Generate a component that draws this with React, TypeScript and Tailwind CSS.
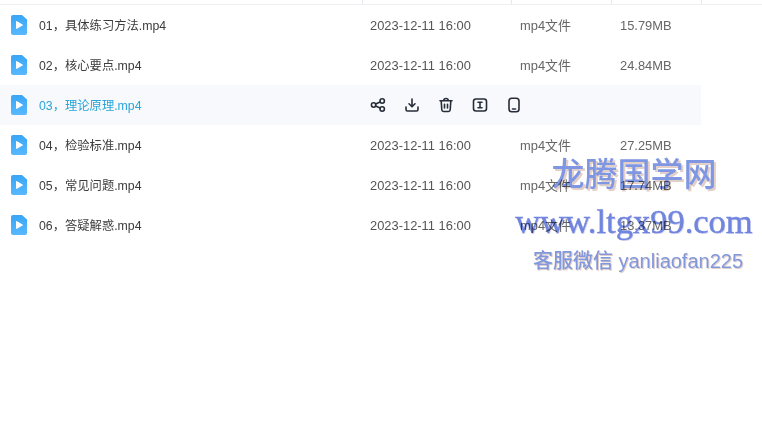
import type { ReactNode } from "react";

const files = [
  { name: "具体练习方法", no: "01", size: "15.79MB" },
  { name: "核心要点", no: "02", size: "24.84MB" },
  { name: "理论原理", no: "03", size: "", active: true },
  { name: "检验标准", no: "04", size: "27.25MB" },
  { name: "常见问题", no: "05", size: "17.74MB" },
  { name: "答疑解惑", no: "06", size: "13.37MB" },
];

const FileIcon = () => (
  <svg width="16" height="20" viewBox="0 0 16 20" className="shrink-0">
    <defs>
      <linearGradient id="fileGrad" x1="0" y1="0" x2="0" y2="1">
        <stop offset="0" stopColor="#38a6f6" />
        <stop offset="1" stopColor="#58b8fe" />
      </linearGradient>
    </defs>
    <path
      d="M2 0H11L16 4.5V18a2 2 0 0 1-2 2H2a2 2 0 0 1-2-2V2a2 2 0 0 1 2-2Z"
      fill="url(#fileGrad)"
    />
    <path d="M5.5 6.5L11.5 10L5.5 13.5Z" fill="#fff" stroke="#fff" strokeLinejoin="round" />
  </svg>
);

const ToolIcon = ({ children }: { children: ReactNode }) => (
  <svg
    width="16"
    height="16"
    viewBox="0 0 16 16"
    fill="none"
    stroke="#262c38"
    strokeWidth="1.6"
    strokeLinecap="round"
    strokeLinejoin="round"
    className="shrink-0"
  >
    {children}
  </svg>
);

export default function App() {
  return (
    <div className="relative h-[441px] w-[762px] overflow-hidden bg-white font-['Liberation_Sans','Noto_Sans_CJK_SC',sans-serif] text-[12.9px] text-[#4a4a4a]">
      <div className="flex h-[5px] border-b border-[#eef0f3]">
        <div className="w-[363px] border-r border-[#e6e8ec]" />
        <div className="w-[149px] border-r border-[#e6e8ec]" />
        <div className="w-[100px] border-r border-[#e6e8ec]" />
        <div className="w-[90px] border-r border-[#e6e8ec]" />
      </div>
      <div className="w-[701px]">
        {files.map((file) => (
          <div
            key={file.no}
            className={`flex h-[40px] items-center ${file.active ? "bg-[#f8f9fc]" : ""}`}
          >
            <div className="ml-[11px] w-[28px]">
              <FileIcon />
            </div>
            <div
              className={`w-[331px] pt-[2px] text-[12.3px] ${file.active ? "text-[#2aa5d8]" : "text-[#3c3c3c]"}`}
            >
              {file.no}
              {"\uFF0C"}
              {file.name}.mp4
            </div>
            {file.active ? (
              <div className="flex items-center gap-[18px]">
                <ToolIcon>
                  <circle cx="3.6" cy="8" r="2.2" />
                  <circle cx="12.2" cy="4" r="2.2" />
                  <circle cx="12.2" cy="12" r="2.2" />
                  <path d="M5.6 7L10.2 5M5.6 9L10.2 11" />
                </ToolIcon>
                <ToolIcon>
                  <path d="M8 2V9.5M5 6.8L8 9.8L11 6.8M2 10V12.5C2 13.4 2.6 14 3.5 14H12.5C13.4 14 14 13.4 14 12.5V10" />
                </ToolIcon>
                <ToolIcon>
                  <path d="M2 3.8H14M5.8 3.5C5.8 2.2 6.6 1.5 8 1.5S10.2 2.2 10.2 3.5M3.2 4L3.8 12.8C3.9 14 4.6 14.5 5.5 14.5H10.5C11.4 14.5 12.1 14 12.2 12.8L12.8 4M6.5 7.2V11M9.5 7.2V11" />
                </ToolIcon>
                <ToolIcon>
                  <rect x="1.5" y="2" width="13" height="12" rx="2.5" />
                  <path d="M6 5.2H10M6 10.8H10M8 5.2V10.8" />
                </ToolIcon>
                <ToolIcon>
                  <rect x="3" y="1.2" width="10" height="13.6" rx="2.8" />
                  <path d="M6.5 12H9.5" />
                </ToolIcon>
              </div>
            ) : (
              <>
                <div className="w-[150px] pt-[1px] text-[#555]">2023-12-11 16:00</div>
                <div className="w-[100px] pt-[1px] text-[#666]">mp4文件</div>
                <div className="pt-[1px] text-[#666]">{file.size}</div>
              </>
            )}
          </div>
        ))}
      </div>

      {/* watermark over the list, the rows show through it */}
      <div className="absolute left-[514px] top-[155px] flex w-[240px] flex-col items-center mix-blend-multiply">
        <div className="text-[33px] leading-[40px] font-medium text-[#7f96e2] [text-shadow:2px_2px_0_#e2cfc8]">
          龙腾国学网
        </div>
        <div className="mt-[7px] font-['Liberation_Serif',serif] text-[34.5px] leading-[38px] text-[#7085de] [-webkit-text-stroke:0.4px_#7085de] [text-shadow:1px_1px_0_#dcd8f0]">
          www.ltgx99.com
        </div>
        <div className="mt-[7px] ml-[8px] text-[20px] leading-[28px] font-medium text-[#8298dc] [text-shadow:1px_1px_0_#e2cfc8]">
          客服微信 yanliaofan225
        </div>
      </div>
    </div>
  );
}
